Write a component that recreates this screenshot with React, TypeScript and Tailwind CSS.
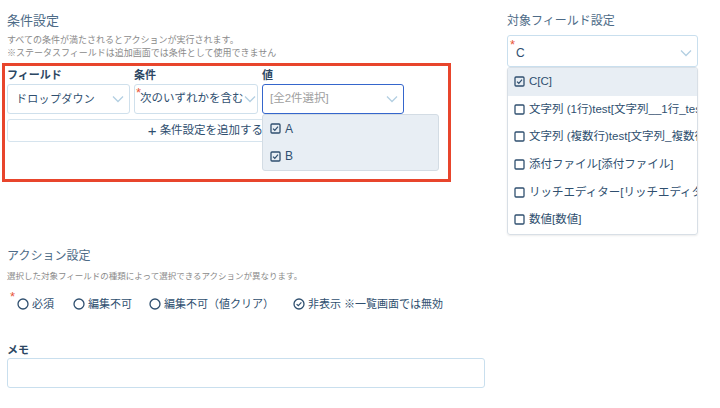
import React from "react";

const Chevron = () => (
  <svg width="12" height="8" viewBox="0 0 12 8" className="shrink-0">
    <path d="M1 1.5 L6 6.5 L11 1.5" fill="none" stroke="#b3cfe2" strokeWidth="1.3" />
  </svg>
);

const CheckBox = ({ checked }: { checked: boolean }) => (
  <svg width="11" height="11" viewBox="0 0 11 11" className="shrink-0">
    <rect x="1" y="1" width="9" height="9" rx="1" fill="none" stroke="#2f4f6f" strokeWidth="1.3" />
    {checked && <path d="M3 5.6 L4.8 7.3 L8 3.6" fill="none" stroke="#2f4f6f" strokeWidth="1.2" />}
  </svg>
);

const Radio = ({ checked }: { checked?: boolean }) => (
  <svg width="12" height="12" viewBox="0 0 12 12" className="shrink-0">
    <circle cx="6" cy="6" r="5" fill="none" stroke="#2f4f6f" strokeWidth="1.3" />
    {checked && <path d="M3.6 6.1 L5.3 7.7 L8.4 4.4" fill="none" stroke="#2f4f6f" strokeWidth="1.2" />}
  </svg>
);

const Star = ({ className }: { className: string }) => (
  <span className={"absolute text-[13px] leading-none text-[#e8573a] " + className}>*</span>
);

export default function App() {
  return (
    <div
      className="flex w-[720px] h-[408px] bg-white overflow-hidden"
      style={{ fontFamily: '"Liberation Sans", "Noto Sans CJK JP", sans-serif' }}
    >
      {/* left column */}
      <div className="w-[500px] pl-[2px] pt-[12px]">
        <div className="pl-[5px] text-[13px] leading-[18px] text-[#4d6b87]">条件設定</div>
        <div className="pl-[5px] mt-[4px] text-[9px] leading-[13px] text-[#8a8a8a]">
          <div>すべての条件が満たされるとアクションが実行されます。</div>
          <div>※ステータスフィールドは追加画面では条件として使用できません</div>
        </div>

        <div className="relative mt-[3px] w-[449px] h-[119px] border-[3px] border-[#e8452c] pl-[2px] pt-[1px]">
          <div className="grid grid-cols-[123px_124px_142px] gap-x-[4px]">
            <div className="text-[11px] font-bold leading-[16px] text-[#2c4763]">フィールド</div>
            <div className="text-[11px] font-bold leading-[16px] text-[#2c4763]">条件</div>
            <div className="text-[11px] font-bold leading-[16px] text-[#2c4763]">値</div>

            <div className="mt-[1px] h-[30px] rounded-[3px] border border-[#cfe0ec] flex items-center justify-between pl-[8px] pr-[5px]">
              <span className="text-[11px] tracking-[0.3px] text-[#2f4f6f]">ドロップダウン</span>
              <Chevron />
            </div>
            <div className="relative mt-[1px] h-[30px] rounded-[3px] border border-[#cfe0ec] flex items-center justify-between pl-[5px] pr-[5px]">
              <Star className="left-[1px] top-[1px]" />
              <span className="text-[11.5px] text-[#2f4f6f] whitespace-nowrap">次のいずれかを含む</span>
              <Chevron />
            </div>
            <div className="mt-[1px] h-[30px] rounded-[3px] border-[1.5px] border-[#3566cc] flex items-center justify-between pl-[7px] pr-[5px]">
              <span className="text-[11.5px] text-[#a0a0a0]">[全2件選択]</span>
              <Chevron />
            </div>
          </div>

          <div className="mt-[5px] w-[397px] h-[23px] rounded-[3px] border border-[#d6e4ee] flex items-center justify-center text-[11.5px] text-[#2f4f6f]">
            <span className="text-[15px] leading-none mr-[3px]">+</span>条件設定を追加する
          </div>

          <div className="absolute left-[257px] top-[48px] w-[177px] h-[57px] rounded-[3px] border border-[#d3dce4] bg-[#e8eef4] flex flex-col">
            <div className="h-[28px] flex items-center gap-[4px] pl-[7px] text-[12px] text-[#2f4f6f]">
              <CheckBox checked />A
            </div>
            <div className="h-[28px] flex items-center gap-[4px] pl-[7px] text-[12px] text-[#2f4f6f]">
              <CheckBox checked />B
            </div>
          </div>
        </div>

        <div className="pl-[5px] mt-[65px] text-[12px] leading-[18px] text-[#4d6b87]">アクション設定</div>
        <div className="pl-[5px] mt-[5px] text-[8.5px] leading-[13px] text-[#8a8a8a]">
          選択した対象フィールドの種類によって選択できるアクションが異なります。
        </div>
        <div className="relative pl-[15px] mt-[13px] h-[16px] flex items-center text-[11px] text-[#2f4f6f]">
          <Star className="left-[8px] top-[-6px]" />
          <div className="flex items-center gap-[3px]"><Radio />必須</div>
          <div className="flex items-center gap-[3px] ml-[19px]"><Radio />編集不可</div>
          <div className="flex items-center gap-[3px] ml-[17px]"><Radio />編集不可（値クリア）</div>
          <div className="flex items-center gap-[3px] ml-[19px]"><Radio checked />非表示 ※一覧画面では無効</div>
        </div>

        <div className="pl-[5px] mt-[31px] text-[11px] font-bold leading-[14px] text-[#2c4763]">メモ</div>
        <div className="ml-[5px] mt-[1px] w-[478px] h-[30px] rounded-[3px] border border-[#c9dfee]" />
      </div>

      {/* right column */}
      <div className="w-[191px] ml-[7px] pt-[12px]">
        <div className="text-[12px] leading-[18px] text-[#4d6b87]">対象フィールド設定</div>
        <div className="relative mt-[5px] h-[32px] rounded-[3px] border border-[#c9dfee] flex items-center justify-between pl-[8px] pr-[5px] pt-[3px]">
          <Star className="left-[2px] top-[2px]" />
          <span className="text-[12px] text-[#2f4f6f]">C</span>
          <Chevron />
        </div>
        <div className="h-[168px] rounded-[3px] border border-[#d8dfe6] shadow-[0_1px_2px_rgba(0,0,0,0.08)] overflow-hidden text-[11.5px] text-[#2f4f6f]">
          {[
            ["C[C]", true],
            ["文字列 (1行)test[文字列__1行_test]", false],
            ["文字列 (複数行)test[文字列_複数行test]", false],
            ["添付ファイル[添付ファイル]", false],
            ["リッチエディター[リッチエディター]", false],
            ["数値[数値]", false],
          ].map(([t, c], i) => (
            <div
              key={i}
              className={
                "h-[27.6px] flex items-center gap-[4px] pl-[6px] whitespace-nowrap " +
                (i === 0 ? "bg-[#e8eef4]" : "")
              }
            >
              <CheckBox checked={c as boolean} />
              {t as string}
            </div>
          ))}
        </div>
      </div>
    </div>
  );
}
